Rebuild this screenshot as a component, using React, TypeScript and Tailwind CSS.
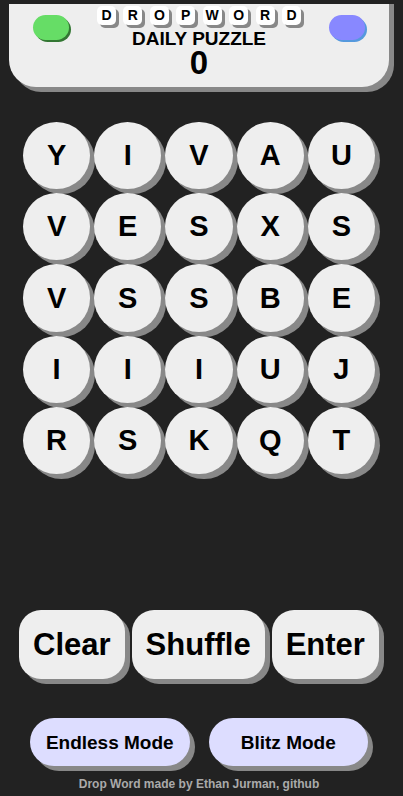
const rows = ["YIVAU", "VESXS", "VSSBE", "IIIUJ", "RSKQT"];

const actionClass =
  "h-[69px] rounded-[22px] bg-[#eee] px-[14px] text-[31px] leading-none shadow-[5px_5px_#888]";
const modeClass =
  "h-12 flex-1 rounded-3xl bg-[#ddf] pt-px text-[19px] leading-none shadow-[5px_5px_#888]";

function Header() {
  return (
    <div className="overflow-hidden pb-[5px] pl-[9px] pr-[14px]">
      <header className="flex h-[83px] items-start justify-between rounded-b-[27px] bg-[#eee] px-6 shadow-[5px_5px_#888,5px_0_#888]">
        <button
          aria-label="Help"
          className="mt-[11px] h-[25px] w-9 rounded-[13px] bg-[#6d6] shadow-[2px_2px_#373]"
        />
        <div className="flex flex-col items-center pt-[2px]">
          <h1 className="flex w-[204px] justify-between text-[14px] leading-[19px]">
            {[..."DROPWORD"].map((c, i) => (
              <span
                key={i}
                className="h-[19px] w-[19px] rounded-[5px] bg-white text-center shadow-[3px_3px_#888]"
              >
                {c}
              </span>
            ))}
          </h1>
          <h2 className="mt-[3px] text-[19px] leading-[22px]">DAILY PUZZLE</h2>
          <p className="text-[33px] leading-[26px]">0</p>
        </div>
        <button
          aria-label="Statistics"
          className="mt-[11px] h-[25px] w-9 rounded-[13px] bg-[#88f] shadow-[2px_2px_#59d]"
        />
      </header>
    </div>
  );
}

export default function App() {
  return (
    <div className="flex min-h-screen flex-col bg-[#222] pt-1 font-['Liberation_Sans',Arial,sans-serif] font-bold text-black">
      <Header />
      <main className="flex flex-1 flex-col">
        <div className="mt-[30px] grid grid-cols-5 gap-1 pl-[23px] pr-7">
          {[...rows.join("")].map((c, i) => (
            <button
              key={i}
              className="aspect-square rounded-full bg-[#eee] text-[29px] leading-none shadow-[5px_5px_#888]"
            >
              {c}
            </button>
          ))}
        </div>
        <div className="mt-auto flex justify-center gap-[7px] pr-[5px]">
          <button className={actionClass}>Clear</button>
          <button className={actionClass}>Shuffle</button>
          <button className={actionClass}>Enter</button>
        </div>
        <nav className="mt-[39px] flex gap-[19px] pl-[30px] pr-[35px]">
          <button className={modeClass}>Endless Mode</button>
          <button className={modeClass}>Blitz Mode</button>
        </nav>
      </main>
      <footer className="mt-[10px] pb-[4px] pr-[5px] text-center text-[12px] leading-4 text-[#aaa]">
        Drop Word made by Ethan Jurman, <a href="#github">github</a>
      </footer>
    </div>
  );
}
